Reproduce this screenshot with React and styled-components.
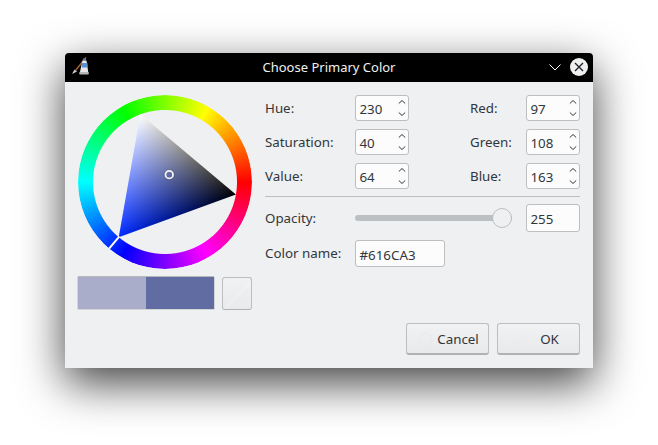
import React from "react";
import styled, { createGlobalStyle } from "styled-components";

const Global = createGlobalStyle`
  html, body { margin: 0; padding: 0; background: #fff; }
  body { font-family: "Noto Sans", "Open Sans", sans-serif; font-size: 13.33px; color: #31363b; }
`;

const Page = styled.div`
  width: 658px;
  height: 445px;
  padding: 53px 0 0 65px;
  box-sizing: border-box;
  overflow: hidden;
`;

const Dialog = styled.div`
  width: 528px;
  height: 315px;
  display: flex;
  flex-direction: column;
  border-radius: 4px 4px 0 0;
  background: #eff0f1;
  box-shadow: 0 15px 45px rgba(0, 0, 0, 0.75);
`;

const TitleBar = styled.div`
  height: 29px;
  flex: none;
  position: relative;
  display: flex;
  align-items: center;
  justify-content: flex-end;
  gap: 9px;
  padding: 0 5px 1px 5px;
  box-sizing: border-box;
  background: #000;
  border-radius: 4px 4px 0 0;
`;

const AppIcon = styled.svg`
  width: 22px;
  height: 22px;
  margin-right: auto;
  margin-left: 1px;
`;

const Title = styled.div`
  position: absolute;
  left: 0;
  right: 0;
  top: 5px;
  text-align: center;
  color: #eff0f1;
  font-size: 13px;
  line-height: 18px;
`;

const WinButton = styled.svg`
  width: ${(p) => p.$size}px;
  height: ${(p) => p.$size}px;
  flex: none;
`;

const Body = styled.div`
  flex: 1;
  display: flex;
  flex-direction: column;
  justify-content: space-between;
  padding: 13px 13px 13px 12px;
  min-height: 0;
`;

const Main = styled.div`
  display: flex;
  gap: 13px;
`;

const LeftColumn = styled.div`
  width: 175px;
  flex: none;
  display: flex;
  flex-direction: column;
  gap: 7px;
`;

const WheelBox = styled.div`
  position: relative;
  width: 174px;
  height: 174px;
  margin-left: 1px;
`;

const Ring = styled.div`
  width: 174px;
  height: 174px;
  border-radius: 50%;
  background: conic-gradient(from 90deg, #f00, #f0f, #00f, #0ff, #0f0, #ff0, #f00);
  -webkit-mask: radial-gradient(closest-side, transparent 71.5px, #000 72.5px);
  mask: radial-gradient(closest-side, transparent 71.5px, #000 72.5px);
`;

const WheelOverlay = styled.svg`
  position: absolute;
  left: 0;
  top: 0;
  width: 174px;
  height: 174px;
`;

const PreviewRow = styled.div`
  display: flex;
  justify-content: space-between;
  height: 34px;
`;

const Preview = styled.div`
  width: 138px;
  display: flex;
  border: 1px solid #d2d4d5;
  border-top-color: #b6b8b9;
  border-radius: 2px;
  box-sizing: border-box;
`;

const Swatch = styled.div`
  flex: ${(p) => p.$grow};
  background: ${(p) => p.$color};
`;

const ColorButton = styled.div`
  width: 30px;
  height: 33px;
  margin-top: 1px;
  box-sizing: border-box;
  border: 1px solid #bcbebf;
  border-bottom-color: #aeb0b1;
  border-radius: 3px;
  background:
    linear-gradient(135deg, transparent 50%, rgba(255, 255, 255, 0.2) 55%, transparent 60%),
    linear-gradient(#f0f1f2, #e9eaeb);
`;

const RightColumn = styled.div`
  flex: 1;
  display: flex;
  flex-direction: column;
`;

const SpinGrid = styled.div`
  display: grid;
  grid-template-columns: 90px 54px 61px 56px 54px;
  grid-auto-rows: 26px;
  row-gap: 8px;
  align-items: center;
`;

const Label = styled.label`
  font-size: 13.33px;
  line-height: 18px;
  color: #31363b;
  white-space: nowrap;
`;

const Field = styled.div`
  box-sizing: border-box;
  background: #fcfcfc;
  border: 1px solid #bcbebf;
  border-radius: 3px;
  height: ${(p) => p.$height || 26}px;
  width: ${(p) => p.$width || 54}px;
  padding-left: 3.5px;
  display: flex;
  align-items: center;
  justify-content: space-between;
  font-size: 13.33px;
  color: #31363b;
  flex: none;
`;

const FieldText = styled.span`
  margin-top: 2px;
`;

const Arrows = styled.svg`
  width: 12px;
  height: 24px;
`;

const Separator = styled.div`
  height: 1px;
  background: #bcbebf;
  margin: 7px 0;
`;

const Row = styled.div`
  display: flex;
  align-items: center;
  margin-bottom: ${(p) => p.$mb || 0}px;
`;

const RowLabel = styled(Label)`
  width: 90px;
  flex: none;
  padding-bottom: ${(p) => p.$lift || 0}px;
`;

const SliderTrack = styled.div`
  position: relative;
  width: 157px;
  height: 6px;
  margin-right: 14px;
  border-radius: 3px;
  background: #bdc0c2;
  flex: none;
`;

const SliderHandle = styled.div`
  position: absolute;
  right: 0;
  top: -7px;
  width: 20px;
  height: 20px;
  box-sizing: border-box;
  border-radius: 50%;
  border: 1px solid #bcbebf;
  background: #eff0f1;
`;

const Footer = styled.div`
  display: flex;
  justify-content: flex-end;
  gap: 8px;
`;

const Button = styled.div`
  position: relative;
  width: 83px;
  height: 32px;
  box-sizing: border-box;
  border: 1px solid #bcbebf;
  border-bottom: 2px solid #b0b2b3;
  border-radius: 3px;
  background: linear-gradient(#f1f2f3, #e8e9ea);
  display: flex;
  align-items: center;
  justify-content: center;
  color: #31363b;
  font-size: 13.33px;
`;

const ButtonIcon = styled.svg`
  position: absolute;
  left: 12px;
  top: 7px;
  width: 16px;
  height: 16px;
`;

const ButtonText = styled.span`
  margin-left: ${(p) => p.$offset}px;
`;

const R = 72;
const C = 87;
const HUE = 230;
const pt = (deg, r = R) => {
  const a = (deg * Math.PI) / 180;
  return [C + r * Math.cos(a), C - r * Math.sin(a)];
};
const foot = (p, a, b) => {
  const dx = b[0] - a[0];
  const dy = b[1] - a[1];
  const t = ((p[0] - a[0]) * dx + (p[1] - a[1]) * dy) / (dx * dx + dy * dy);
  return [a[0] + t * dx, a[1] + t * dy];
};

function ColorWheel() {
  const col = pt(HUE);
  const white = pt(HUE - 120);
  const black = pt(HUE + 120);
  const points = [col, white, black].map((p) => p.join(",")).join(" ");
  const fc = foot(col, white, black);
  const fw = foot(white, col, black);
  const s = 0.4;
  const v = 0.64;
  const mx = v * s * col[0] + v * (1 - s) * white[0] + (1 - v) * black[0];
  const my = v * s * col[1] + v * (1 - s) * white[1] + (1 - v) * black[1];
  const l0 = pt(HUE, 71);
  const l1 = pt(HUE, 87);
  return (
    <WheelBox>
      <Ring />
      <WheelOverlay viewBox="0 0 174 174">
        <defs>
          <linearGradient id="gc" gradientUnits="userSpaceOnUse" x1={col[0]} y1={col[1]} x2={fc[0]} y2={fc[1]}>
            <stop offset="0" stopColor="#002bff" />
            <stop offset="1" stopColor="#000" />
          </linearGradient>
          <linearGradient id="gw" gradientUnits="userSpaceOnUse" x1={white[0]} y1={white[1]} x2={fw[0]} y2={fw[1]}>
            <stop offset="0" stopColor="#fff" />
            <stop offset="1" stopColor="#000" />
          </linearGradient>
          <clipPath id="tri">
            <polygon points={points} />
          </clipPath>
        </defs>
        <g clipPath="url(#tri)" style={{ isolation: "isolate" }}>
          <rect width="174" height="174" fill="url(#gc)" />
          <rect width="174" height="174" fill="url(#gw)" style={{ mixBlendMode: "plus-lighter" }} />
        </g>
        <line x1={l0[0]} y1={l0[1]} x2={l1[0]} y2={l1[1]} stroke="#fff" strokeWidth="2" />
        <circle cx={mx} cy={my} r="3.9" fill="none" stroke="#f4f6fa" strokeWidth="2" />
        <circle cx={mx} cy={my} r="5" fill="none" stroke="#31363b" strokeWidth="0.4" />
      </WheelOverlay>
    </WheelBox>
  );
}

function Spin({ value }) {
  return (
    <Field>
      <FieldText>{value}</FieldText>
      <Arrows viewBox="0 0 12 24">
        <path d="M2.8 7.5 L6 4.5 L9.2 7.5" fill="none" stroke="#31363b" strokeWidth="1" />
        <path d="M2.8 16.5 L6 19.5 L9.2 16.5" fill="none" stroke="#31363b" strokeWidth="1" />
      </Arrows>
    </Field>
  );
}

export default function App() {
  return (
    <Page>
      <Global />
      <Dialog>
        <TitleBar>
          <AppIcon viewBox="0 0 22 22">
            <path d="M1 18 L3.5 13.5 L6 15.5 Z" fill="#d0d0d0" />
            <path d="M4.5 14.5 L15 1.5" stroke="#a8662c" strokeWidth="1.4" fill="none" />
            <path d="M11.5 4.5 H15.5 L17.5 18 H8.5 Z" fill="#e6e8ea" />
            <rect x="11" y="7" width="5.5" height="4.5" fill="#5b8fd0" />
            <rect x="8.5" y="16" width="9" height="2.5" fill="#b5b8ba" />
            <rect x="12" y="2.5" width="3" height="2" fill="#5a7fb0" />
          </AppIcon>
          <Title>Choose Primary Color</Title>
          <WinButton $size={12} viewBox="0 0 12 12">
            <path d="M0.5 3.5 L6 9 L11.5 3.5" fill="none" stroke="#ffffff" strokeWidth="1" />
          </WinButton>
          <WinButton $size={18} viewBox="0 0 18 18">
            <circle cx="9" cy="9" r="9" fill="#eff0f1" />
            <path d="M5 5 L13 13 M13 5 L5 13" stroke="#232629" strokeWidth="1.4" />
          </WinButton>
        </TitleBar>
        <Body>
          <Main>
            <LeftColumn>
              <ColorWheel />
              <PreviewRow>
                <Preview>
                  <Swatch $grow={68} $color="#aaadca" />
                  <Swatch $grow={68} $color="#616ca3" />
                </Preview>
                <ColorButton />
              </PreviewRow>
            </LeftColumn>
            <RightColumn>
              <SpinGrid>
                <Label>Hue:</Label><Spin value="230" /><span /><Label>Red:</Label><Spin value="97" />
                <Label>Saturation:</Label><Spin value="40" /><span /><Label>Green:</Label><Spin value="108" />
                <Label>Value:</Label><Spin value="64" /><span /><Label>Blue:</Label><Spin value="163" />
              </SpinGrid>
              <Separator />
              <Row $mb={8}>
                <RowLabel>Opacity:</RowLabel>
                <SliderTrack><SliderHandle /></SliderTrack>
                <Field $height={28}><FieldText>255</FieldText></Field>
              </Row>
              <Row>
                <RowLabel $lift={2}>Color name:</RowLabel>
                <Field $height={27} $width={90}><FieldText>#616CA3</FieldText></Field>
              </Row>
            </RightColumn>
          </Main>
          <Footer>
            <Button>
              <ButtonIcon viewBox="0 0 16 16">
                <circle cx="7" cy="8" r="6" fill="none" stroke="#e9eaeb" strokeWidth="1" />
                <path d="M3 12 L11 4" stroke="#e9eaeb" strokeWidth="1" />
              </ButtonIcon>
              <ButtonText $offset={21}>Cancel</ButtonText>
            </Button>
            <Button>
              <ButtonIcon viewBox="0 0 16 16">
                <path d="M3 9 L7 13 L14 4" fill="none" stroke="#e9eaeb" strokeWidth="1" />
              </ButtonIcon>
              <ButtonText $offset={22}>OK</ButtonText>
            </Button>
          </Footer>
        </Body>
      </Dialog>
    </Page>
  );
}
